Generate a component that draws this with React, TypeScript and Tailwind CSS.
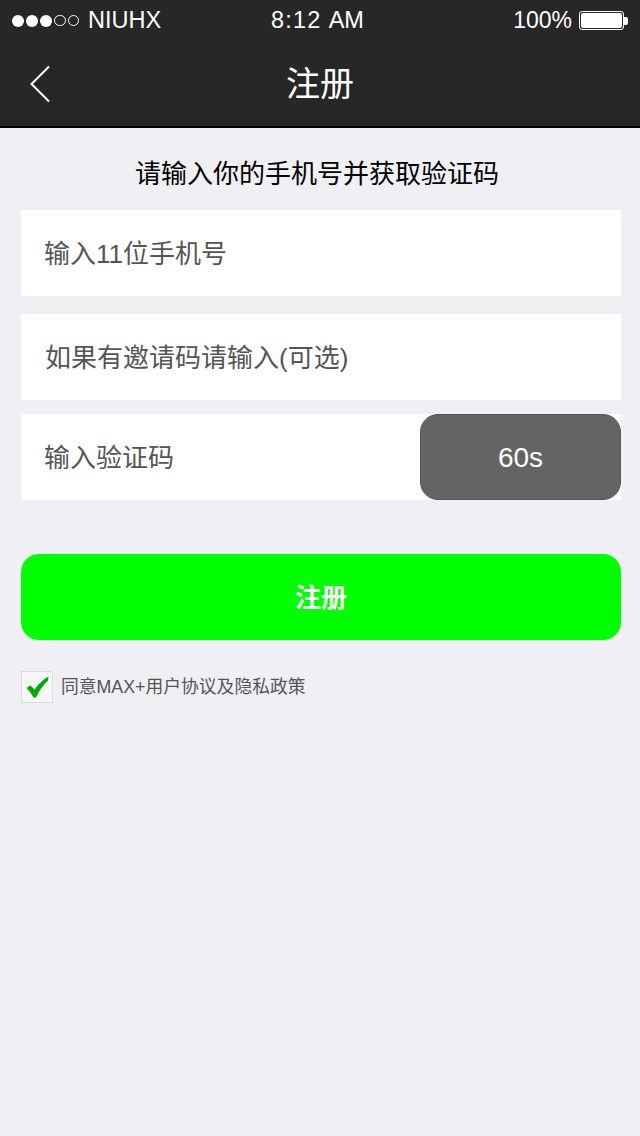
const FONT = '[font-family:"Liberation_Sans","Noto_Sans_CJK_SC",sans-serif]';

function BackIcon() {
  return (
    <svg width="22" height="38" viewBox="0 0 22 38" fill="none" className="block">
      <path d="M20 1.5 L2.5 19 L20 36.5" stroke="#fff" strokeWidth="2" />
    </svg>
  );
}

function Dots() {
  return (
    <div className="flex items-center gap-[2px]">
      {[0, 1, 2].map(i => (
        <span key={i} className="w-[12px] h-[12px] rounded-full bg-white" />
      ))}
      {[3, 4].map(i => (
        <span key={i} className="w-[11.5px] h-[11.5px] rounded-full border border-white" />
      ))}
    </div>
  );
}

function Battery() {
  return (
    <div className="flex items-center">
      <div className="w-[45px] h-[19px] rounded-[3px] border border-white p-[1px]">
        <div className="w-full h-full rounded-[2px] bg-white" />
      </div>
      <div className="w-[4px] h-[8px] rounded-r-[2px] bg-white" />
    </div>
  );
}

function Field({ label, className }: { label: string; className?: string }) {
  return (
    <div className={`h-[86px] bg-white pt-[2px] flex items-center text-[26px] text-[#555] ${className ?? ''}`}>
      {label}
    </div>
  );
}

export default function App() {
  return (
    <div className={`w-[640px] h-[1136px] bg-[#efeff4] flex flex-col ${FONT}`}>
      {/* Status bar + nav */}
      <div className="h-[128px] bg-[#272727] border-b-2 border-black shrink-0">
        <div className="h-[40px] pl-[12px] pr-[12px] pt-[1px] flex items-center justify-between text-white text-[23.5px]">
          <div className="flex items-center gap-[9px] w-[200px]">
            <Dots />
            <span>NIUHX</span>
          </div>
          <span className="flex gap-[7px] mr-[5px]">
            <span className="tracking-[1.2px]">8:12</span>
            <span>AM</span>
          </span>
          <div className="flex items-center justify-end gap-[7px] w-[200px] text-[23px]">
            <span>100%</span>
            <Battery />
          </div>
        </div>
        <div className="h-[86px] relative flex items-center justify-center text-white text-[34px] pt-[3px]">
          <div className="absolute left-[29px] top-[25px]">
            <BackIcon />
          </div>
          <span>注册</span>
        </div>
      </div>

      {/* Form */}
      <div className="px-[21px] pr-[19px]">
        <div className="h-[82px] flex items-center justify-center text-[26px] text-black pt-[10px] pr-[8px]">
          请输入你的手机号并获取验证码
        </div>
        <Field label="输入11位手机号" className="pl-[23px]" />
        <Field label="如果有邀请码请输入(可选)" className="mt-[18px] pl-[24px]" />
        <div className="mt-[14px] h-[86px] bg-white flex items-stretch">
          <div className="flex-1 pl-[23px] pt-[2px] flex items-center text-[26px] text-[#555]">输入验证码</div>
          <div className="w-[201px] rounded-[18px] bg-[#646464] border border-[#555] pt-[2px] flex items-center justify-center text-white text-[28px]">
            60s
          </div>
        </div>

        <div className="mt-[54px] h-[86px] rounded-[18px] bg-[#00ff00] pt-[2px] flex items-center justify-center text-white text-[26px] font-bold">
          注册
        </div>

        <div className="mt-[31px] flex items-center gap-[8px]">
          <div className="w-[32px] h-[32px] bg-[#f6f6f8] border border-[#dcdcdc] flex items-center justify-center">
            <svg width="23" height="22" viewBox="0 0 23 22">
              <path d="M0.5 12 L4.5 9.5 L8.5 13.5 C12 8.5 17 3.5 22.5 0.5 L22 4.5 C17 9 13 15 10 21.5 L7.5 21.5 C5.5 18 3.5 15 0.5 12 Z" fill="#00aa00" />
            </svg>
          </div>
          <span className="text-[17.8px] text-[#555]">同意MAX+用户协议及隐私政策</span>
        </div>
      </div>
    </div>
  );
}
